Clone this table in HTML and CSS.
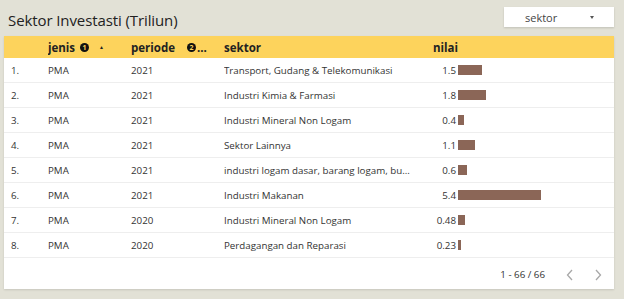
FILE: index.html
```html
<!DOCTYPE html>
<html>
<head>
<meta charset="utf-8">
<link rel="stylesheet" href="styles.css">
</head>
<body>
<div class="page">
  <div class="topbar">
    <div class="title">Sektor Investasti (Triliun)</div>
    <div class="dropdown"><span class="dd-label">sektor</span><span class="dd-caret"></span></div>
  </div>
  <div class="card">
    <div class="row head">
      <div class="c-num"></div>
      <div class="c-jenis">jenis <span class="badge">1</span> <span class="sort">&#9650;</span></div>
      <div class="c-per">periode <span class="badge b2">2</span><span class="ell">...</span></div>
      <div class="c-sek">sektor</div>
      <div class="c-nil"><span class="val">nilai</span></div>
    </div>
    <div class="row"><div class="c-num">1.</div><div class="c-jenis">PMA</div><div class="c-per">2021</div><div class="c-sek">Transport, Gudang &amp; Telekomunikasi</div><div class="c-nil"><span class="val">1.5</span><span class="bar" style="width:24px"></span></div></div>
    <div class="row"><div class="c-num">2.</div><div class="c-jenis">PMA</div><div class="c-per">2021</div><div class="c-sek">Industri Kimia &amp; Farmasi</div><div class="c-nil"><span class="val">1.8</span><span class="bar" style="width:28px"></span></div></div>
    <div class="row"><div class="c-num">3.</div><div class="c-jenis">PMA</div><div class="c-per">2021</div><div class="c-sek">Industri Mineral Non Logam</div><div class="c-nil"><span class="val">0.4</span><span class="bar" style="width:6px"></span></div></div>
    <div class="row"><div class="c-num">4.</div><div class="c-jenis">PMA</div><div class="c-per">2021</div><div class="c-sek">Sektor Lainnya</div><div class="c-nil"><span class="val">1.1</span><span class="bar" style="width:17px"></span></div></div>
    <div class="row"><div class="c-num">5.</div><div class="c-jenis">PMA</div><div class="c-per">2021</div><div class="c-sek">industri logam dasar, barang logam, bu...</div><div class="c-nil"><span class="val">0.6</span><span class="bar" style="width:9px"></span></div></div>
    <div class="row"><div class="c-num">6.</div><div class="c-jenis">PMA</div><div class="c-per">2021</div><div class="c-sek">Industri Makanan</div><div class="c-nil"><span class="val">5.4</span><span class="bar" style="width:83px"></span></div></div>
    <div class="row"><div class="c-num">7.</div><div class="c-jenis">PMA</div><div class="c-per">2020</div><div class="c-sek">Industri Mineral Non Logam</div><div class="c-nil"><span class="val">0.48</span><span class="bar" style="width:7px"></span></div></div>
    <div class="row"><div class="c-num">8.</div><div class="c-jenis">PMA</div><div class="c-per">2020</div><div class="c-sek">Perdagangan dan Reparasi</div><div class="c-nil"><span class="val">0.23</span><span class="bar" style="width:3px"></span></div></div>
    <div class="footer">
      <span class="count">1 - 66 / 66</span>
      <svg class="chev" width="10" height="14" viewBox="0 0 10 14"><path d="M7 2 L2.5 7 L7 12" fill="none" stroke="#a8a8a8" stroke-width="1.3"/></svg>
      <svg class="chev" width="10" height="14" viewBox="0 0 10 14"><path d="M3 2 L7.5 7 L3 12" fill="none" stroke="#a8a8a8" stroke-width="1.3"/></svg>
    </div>
  </div>
</div>
</body>
</html>
```

FILE: styles.css
```css
html, body {
  margin: 0;
  padding: 0;
  background: #e2e1d6;
  font-family: "Open Sans", "Noto Sans", sans-serif;
  color: #333;
}
.page {
  width: 624px;
  height: 299px;
  padding: 0 10px 0 4px;
  box-sizing: border-box;
}
.topbar {
  height: 36px;
  display: flex;
  justify-content: space-between;
  align-items: flex-start;
}
.title {
  font-size: 15px;
  color: #222;
  margin: 10px 0 0 4px;
  line-height: 20px;
  letter-spacing: -0.1px;
}
.dropdown {
  margin-top: 7px;
  width: 110px;
  height: 20px;
  background: #fff;
  box-shadow: 0 1px 2px rgba(0,0,0,0.15);
  display: flex;
  align-items: center;
}
.dd-label {
  font-size: 11px;
  color: #444;
  margin-left: 21px;
}
.dd-caret {
  width: 0;
  height: 0;
  border-left: 2.5px solid transparent;
  border-right: 2.5px solid transparent;
  border-top: 3px solid #555;
  margin-left: auto;
  margin-right: 20px;
}
.card {
  background: #fff;
  height: 253px;
  box-shadow: 0 1px 2px rgba(0,0,0,0.12);
  display: flex;
  flex-direction: column;
}
.row {
  display: grid;
  grid-template-columns: 44px 83px 93px 196px 1fr;
  align-items: center;
  height: 25px;
  border-bottom: 1px solid #eeeeee;
  box-sizing: border-box;
  font-size: 9.75px;
  color: #333;
}
.row > div {
  white-space: nowrap;
  overflow: hidden;
}
.c-num { padding-left: 7px; }
.row.head {
  background: #fdd35c;
  height: 22px;
  border-bottom: none;
  font-weight: 700;
  font-size: 11.5px;
  color: #222;
}
.row.head > div { display: flex; align-items: center; }
.badge {
  display: inline-flex;
  width: 9px;
  height: 9px;
  border-radius: 50%;
  background: #111;
  color: #fdd35c;
  font-size: 7px;
  align-items: center;
  justify-content: center;
  margin-left: 5px;
  line-height: 1;
}
.badge.b2 { margin-left: 12px; }
.sort {
  font-size: 5px;
  margin-left: 10px;
  color: #222;
}
.ell { margin-left: 1px; }
.c-nil { display: flex; align-items: center; }
.val {
  width: 38px;
  text-align: right;
  padding-right: 2px;
  box-sizing: border-box;
}
.row.head .val { width: 38px; padding-right: 0; }
.bar {
  display: inline-block;
  height: 10px;
  background: #8b6657;
}
.footer {
  flex: 1;
  display: flex;
  align-items: center;
  justify-content: flex-end;
  font-size: 9.75px;
  color: #333;
  padding-right: 11px;
  padding-top: 2px;
}
.count { margin-right: 20px; }
.chev { margin-left: 18px; }
.chev:first-of-type { margin-left: 0; }
```
